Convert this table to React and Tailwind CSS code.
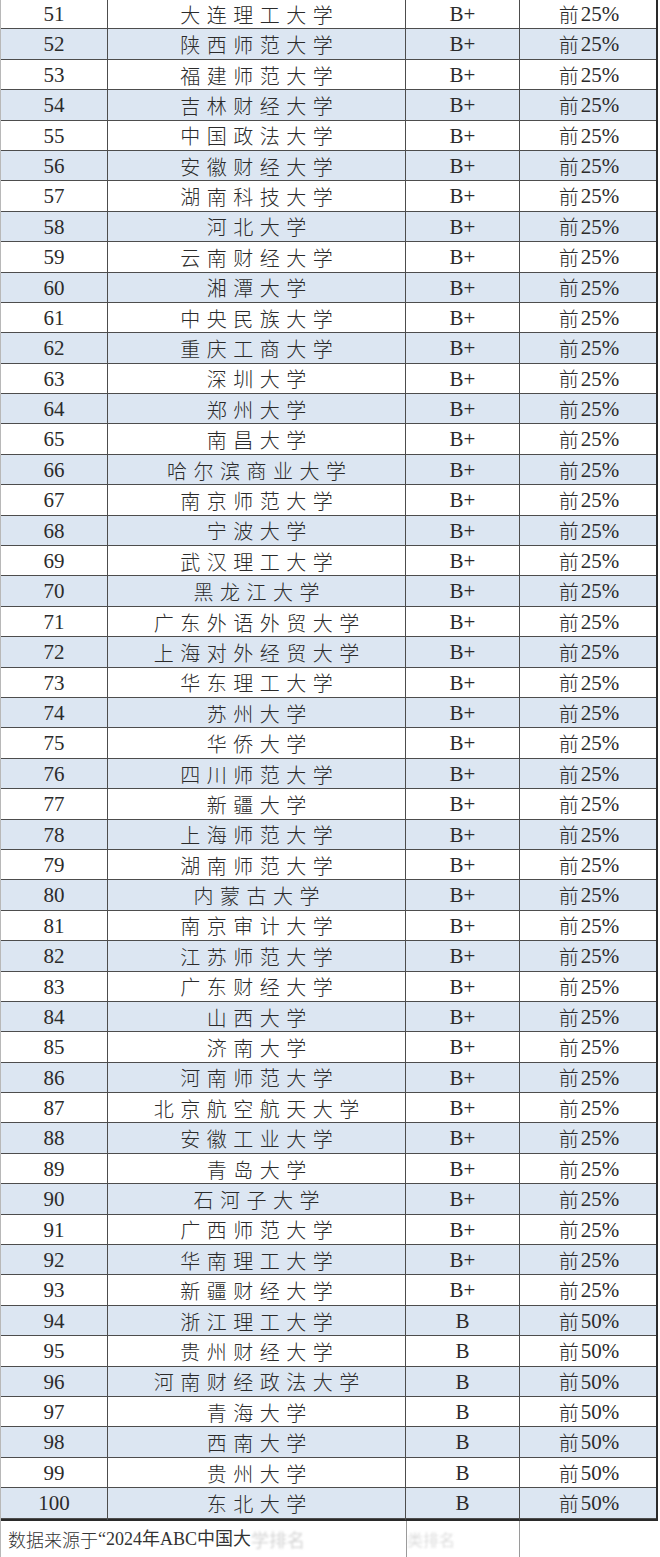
import React from 'react';

const names = [
  '大连理工大学', '陕西师范大学', '福建师范大学', '吉林财经大学', '中国政法大学',
  '安徽财经大学', '湖南科技大学', '河北大学', '云南财经大学', '湘潭大学',
  '中央民族大学', '重庆工商大学', '深圳大学', '郑州大学', '南昌大学',
  '哈尔滨商业大学', '南京师范大学', '宁波大学', '武汉理工大学', '黑龙江大学',
  '广东外语外贸大学', '上海对外经贸大学', '华东理工大学', '苏州大学', '华侨大学',
  '四川师范大学', '新疆大学', '上海师范大学', '湖南师范大学', '内蒙古大学',
  '南京审计大学', '江苏师范大学', '广东财经大学', '山西大学', '济南大学',
  '河南师范大学', '北京航空航天大学', '安徽工业大学', '青岛大学', '石河子大学',
  '广西师范大学', '华南理工大学', '新疆财经大学', '浙江理工大学', '贵州财经大学',
  '河南财经政法大学', '青海大学', '西南大学', '贵州大学', '东北大学',
];

// rows 51..93 are B+ / 前25%, the rest B / 前50%
const rows = names.map((name, i) => {
  const rank = 51 + i;
  const top = rank <= 93;
  return { rank, name, grade: top ? 'B+' : 'B', pct: top ? '25%' : '50%' };
});

const serif = "font-['Liberation_Serif','Noto_Sans_CJK_SC',serif]";

const Row = ({ row }) => {
  const shaded = row.rank % 2 === 0;
  return (
    <div
      className={`grid grid-cols-[107px_298px_114px_138px] h-[30.4px] border-b-[1.5px] border-[#4d4d4d] text-[#2b2b2b] ${
        shaded ? 'bg-[#dce6f2]' : 'bg-white'
      }`}
    >
      <div className={`flex items-center justify-center border-r-[1.5px] border-[#4d4d4d] text-[21px] ${serif}`}>
        {row.rank}
      </div>
      <div className="flex items-center justify-center border-r-[1.5px] border-[#4d4d4d] pl-[6.5px] text-[20px] tracking-[6.5px] font-light font-['Noto_Sans_CJK_SC',sans-serif]">
        {row.name}
      </div>
      <div className={`flex items-center justify-center border-r-[1.5px] border-[#4d4d4d] text-[21px] ${serif}`}>
        {row.grade}
      </div>
      <div className={`flex items-center justify-center text-[21px] ${serif}`}>
        <span className="font-light font-['Noto_Sans_CJK_SC',sans-serif] text-[20px] mr-[2px]">前</span>
        {row.pct}
      </div>
    </div>
  );
};

const App = () => {
  return (
    <div className="w-[660px] h-[1557px] overflow-hidden bg-white">
      <div className="w-[659px] -mt-[1px] border-l border-[#b8b8b8]">
        <div className="w-[657px] border-r-2 border-b-2 border-[#2a2a2a]">
          {rows.map((row) => (
            <Row key={row.rank} row={row} />
          ))}
        </div>
        {/* source note under the table */}
        <div className="grid grid-cols-[107px_298px_114px_138px] h-[37px]">
          <div className="col-span-2 flex items-center pl-[7px] whitespace-nowrap text-[18px] text-[#333]">
            <span className="font-light font-['Noto_Sans_CJK_SC',sans-serif]">数据来源于</span>
            <span className={`${serif} text-[18px]`}>“2024年ABC中国大</span>
            <span className="text-[#d4d4d4] blur-[1px] font-['Noto_Sans_CJK_SC',sans-serif]">学排名</span>
          </div>
          <div className="border-l border-r border-[#9a9a9a] flex items-center">
            <span className="text-[#dcdcdc] text-[16px] blur-[1px] font-['Noto_Sans_CJK_SC',sans-serif] whitespace-nowrap">
              类排名
            </span>
          </div>
          <div />
        </div>
      </div>
    </div>
  );
};

export default App;
